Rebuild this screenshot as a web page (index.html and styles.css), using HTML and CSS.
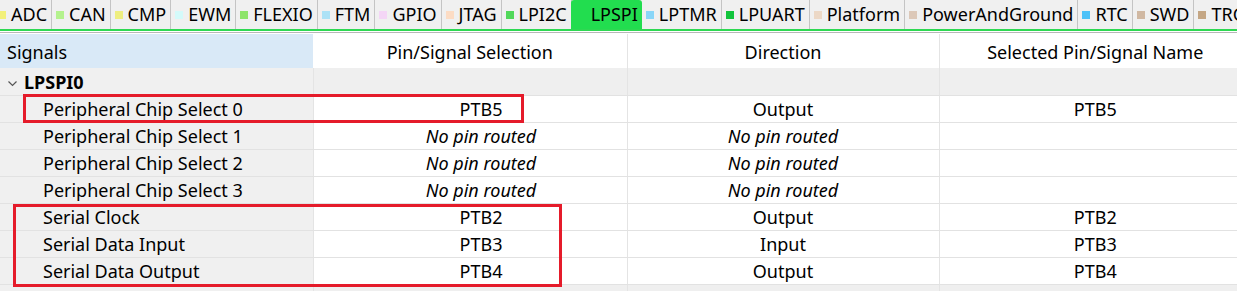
FILE: index.html
```html
<!doctype html>
<html>
<head>
<meta charset="utf-8">
<link rel="stylesheet" href="styles.css">
</head>
<body>
	<div class="tabs">
		<div class="tab"><i style="background:#f2f07a"></i>ADC</div>
		<div class="tab"><i style="background:#b4f28e"></i>CAN</div>
		<div class="tab"><i style="background:#eeee80"></i>CMP</div>
		<div class="tab"><i style="background:#d4fafa"></i>EWM</div>
		<div class="tab"><i style="background:#8ee46a"></i>FLEXIO</div>
		<div class="tab"><i style="background:#ace2f6"></i>FTM</div>
		<div class="tab"><i style="background:#f4d6f6"></i>GPIO</div>
		<div class="tab"><i style="background:#fcdcc4"></i>JTAG</div>
		<div class="tab"><i style="background:#52d85a"></i>LPI2C</div>
		<div class="tab active"><i></i>LPSPI</div>
		<div class="tab"><i style="background:#8ad6f8"></i>LPTMR</div>
		<div class="tab"><i style="background:#12c43c"></i>LPUART</div>
		<div class="tab"><i style="background:#ecd8c6"></i>Platform</div>
		<div class="tab"><i style="background:#dcc8b8"></i>PowerAndGround</div>
		<div class="tab"><i style="background:#4ec2f8"></i>RTC</div>
		<div class="tab"><i style="background:#d0b8a2"></i>SWD</div>
		<div class="tab"><i style="background:#c4a684"></i>TRG</div>
	</div>
	<div class="rule"></div>

	<div class="grid">
		<table class="signals">
			<thead>
				<tr>
					<th class="c-sig">Signals</th>
					<th>Pin/Signal Selection</th>
					<th>Direction</th>
					<th class="c-last">Selected Pin/Signal Name</th>
				</tr>
			</thead>
			<tbody>
				<tr class="group">
					<td class="c-sig"><svg class="chev" width="9" height="6" viewBox="0 0 9 6"><polyline points="0.5,0.5 4.5,4.5 8.5,0.5" fill="none" stroke="#555" stroke-width="1.2"/></svg><b>LPSPI0</b></td>
					<td></td><td></td><td class="c-last"></td>
				</tr>
				<tr>
					<td class="c-sig child">Peripheral Chip Select 0</td>
					<td class="pin">PTB5</td><td>Output</td><td class="c-last">PTB5</td>
				</tr>
				<tr>
					<td class="c-sig child">Peripheral Chip Select 1</td>
					<td class="pin none">No pin routed</td><td class="none">No pin routed</td><td class="c-last"></td>
				</tr>
				<tr>
					<td class="c-sig child">Peripheral Chip Select 2</td>
					<td class="pin none">No pin routed</td><td class="none">No pin routed</td><td class="c-last"></td>
				</tr>
				<tr>
					<td class="c-sig child">Peripheral Chip Select 3</td>
					<td class="pin none">No pin routed</td><td class="none">No pin routed</td><td class="c-last"></td>
				</tr>
				<tr>
					<td class="c-sig child">Serial Clock</td>
					<td class="pin">PTB2</td><td>Output</td><td class="c-last">PTB2</td>
				</tr>
				<tr>
					<td class="c-sig child">Serial Data Input</td>
					<td class="pin">PTB3</td><td>Input</td><td class="c-last">PTB3</td>
				</tr>
				<tr>
					<td class="c-sig child">Serial Data Output</td>
					<td class="pin">PTB4</td><td>Output</td><td class="c-last">PTB4</td>
				</tr>
				<tr class="group">
					<td class="c-sig"><svg class="chev" width="9" height="6" viewBox="0 0 9 6"><polyline points="0.5,0.5 4.5,4.5 8.5,0.5" fill="none" stroke="#555" stroke-width="1.2"/></svg><b>LPSPI1</b></td>
					<td></td><td></td><td class="c-last"></td>
				</tr>
			</tbody>
		</table>
		<div class="mark mark-cs"></div>
		<div class="mark mark-data"></div>
	</div>
</body>
</html>
```

FILE: styles.css
```css
*{
	margin:0;
	padding:0;
	box-sizing:border-box;
}
body{
	background:#fff;
	font-family:"Noto Sans","Open Sans",sans-serif;
	font-size:18px;
	color:#000;
	overflow:hidden;
}
.tabs{
	display:flex;
	height:31px;
	margin-left:-6px;
	background:#f0f0f0;
	border-bottom:2px solid #2ed852;
	white-space:nowrap;
}
.tab{
	display:flex;
	align-items:center;
	padding:0 4px 0 4px;
	border-right:1px solid #c4c4c4;
	font-size:18px;
	line-height:29px;
}
.tab i{
	width:8px;
	height:8px;
	margin-right:5px;
	flex:none;
}
.tab.active{
	background:#22dd4f;
	border-right:none;
	border-radius:3px 3px 0 0;
	padding-left:7px;
	margin-left:-1px;
}
.tab.active i{
	background:#22dd4f;
}
.rule{
	height:3px;
	border-top:1px solid #fff;
	border-bottom:1px solid #fff;
	background:#b8b8b8;
}
.grid{
	position:relative;
	width:1251px;
}
.signals{
	border-collapse:collapse;
	table-layout:fixed;
	width:1251px;
}
.signals th{
	height:34px;
	font-weight:normal;
	text-align:center;
	border-right:1px solid #e4e4e4;
	background:#fff;
	padding-top:2px;
}
.signals th.c-sig{
	width:313px;
	text-align:left;
	padding-left:7px;
	background:#d9e9f7;
	border-right:none;
}
.signals th:nth-child(2){
	width:314px;
}
.signals th:nth-child(3){
	width:312px;
}
.signals td{
	height:27px;
	text-align:center;
	border-bottom:1px solid #e2e2e2;
	border-right:1px solid #e4e4e4;
	white-space:nowrap;
	line-height:24px;
	padding-top:1px;
}
.signals td.c-sig{
	text-align:left;
	background:#f0f0f0;
	border-right:1px solid #e4e4e4;
}
.signals td.child{
	padding-left:43px;
}
.group td{
	background:#efefef;
}
.group td.c-sig{
	padding-left:8px;
	font-size:18px;
}
.group b{
	font-weight:bold;
}
.chev{
	margin-right:7px;
	vertical-align:middle;
}
.signals td.pin{
	padding-left:22px;
}
.signals td.none{
	font-style:italic;
}
.signals .c-last{
	border-right:none;
}
.mark{
	position:absolute;
	border:3px solid #e51b2a;
}
.mark-cs{
	left:23px;
	top:60px;
	width:501px;
	height:29px;
}
.mark-data{
	left:13px;
	top:170px;
	width:549px;
	height:83px;
}
```
